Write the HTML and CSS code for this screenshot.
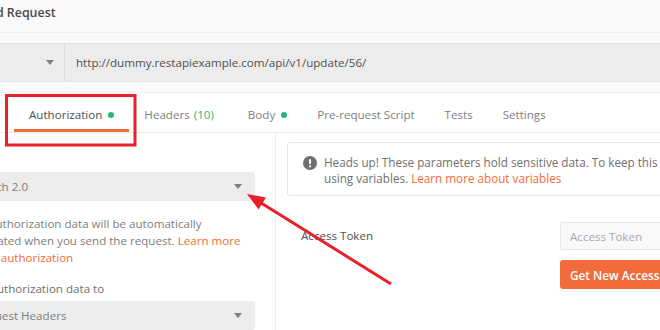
FILE: index.html
```html
<!DOCTYPE html>
<html lang="en">
<head>
    <meta charset="UTF-8">
    <meta name="viewport" content="width=device-width, initial-scale=1.0">
    <title>Untitled Request</title>
    <link rel="stylesheet" href="styles.css">
</head>
<body>
    <div class="app">
        <div class="top">
            <div class="title-bar">
                <h1>Untitled Request</h1>
            </div>
            <div class="url-bar">
                <div class="method">PUT <span class="caret"></span></div>
                <div class="url">http://dummy.restapiexample.com/api/v1/update/56/</div>
            </div>
        </div>

        <nav class="tabs">
            <div class="tab active">Authorization <span class="dot"></span></div>
            <div class="tab">Headers <span class="count">(10)</span></div>
            <div class="tab">Body <span class="dot"></span></div>
            <div class="tab">Pre-request Script</div>
            <div class="tab">Tests</div>
            <div class="tab">Settings</div>
        </nav>

        <div class="auth">
            <div class="auth-side">
                <div class="select">OAuth 2.0 <span class="caret"></span></div>
                <p class="hint">The authorization data will be automatically generated when you send the request. <a href="#">Learn more about authorization</a></p>
                <div class="field-label">Add authorization data to</div>
                <div class="select">Request Headers <span class="caret"></span></div>
            </div>

            <div class="auth-main">
                <div class="notice">
                    <svg class="notice-icon" width="14" height="14" viewBox="0 0 14 14">
                        <circle cx="7" cy="7" r="7" fill="#707070"/>
                        <rect x="6" y="3" width="2" height="5.2" rx="1" fill="#fff"/>
                        <circle cx="7" cy="10.3" r="1.1" fill="#fff"/>
                    </svg>
                    <div class="notice-text">Heads up! These parameters hold sensitive data. To keep this data secure while working in a collaborative environment, we recommend<br>using variables. <a href="#">Learn more about variables</a></div>
                </div>

                <div class="token-row">
                    <label for="token">Access Token</label>
                    <div class="token-controls">
                        <input type="text" id="token" placeholder="Access Token">
                        <button>Get New Access Token</button>
                    </div>
                </div>
            </div>
        </div>
    </div>

    <!-- annotation drawn over the screenshot -->
    <svg class="annotations" width="660" height="330" viewBox="0 0 660 330">
        <rect x="6.5" y="95.5" width="128.5" height="49.5" fill="none" stroke="#e8202a" stroke-width="3"/>
        <line x1="391" y1="284" x2="258" y2="201" stroke="#e8202a" stroke-width="3"/>
        <polygon points="247,194 266,197.6 258.6,209.4" fill="#e8202a"/>
    </svg>
</body>
</html>
```

FILE: styles.css
```css
body {
    margin: 0;
    width: 660px;
    height: 330px;
    overflow: hidden;
    position: relative;
    font-family: "Open Sans", Arial, sans-serif;
    font-size: 11.6px;
    background-color: #fff;
    color: #505050;
}
a {
    color: #f26b3a;
    text-decoration: none;
}
.app {
    margin-left: -50px;
    width: 760px;
}
.top {
    background-color: #fafafa;
    padding-bottom: 10px;
    border-bottom: 1px solid #ededed;
}
.title-bar {
    height: 33px;
    box-sizing: border-box;
    padding: 4px 0 0 5px;
    border-bottom: 1px solid #efefef;
    margin-bottom: 10px;
}
h1 {
    margin: 0;
    font-size: 12.4px;
    font-weight: 600;
    color: #4a4a4a;
}
.url-bar {
    display: flex;
    height: 39px;
    box-sizing: border-box;
    background-color: #ececec;
    border-top: 1px solid #e0e0e0;
    border-bottom: 1px solid #e3e3e3;
}
.method {
    width: 115px;
    box-sizing: border-box;
    padding: 0 10px;
    display: flex;
    align-items: center;
    justify-content: space-between;
    border-right: 1px solid #dcdcdc;
    color: #505050;
}
.url {
    display: flex;
    align-items: center;
    padding-left: 11px;
    color: #505050;
}
.caret {
    width: 0;
    height: 0;
    border-left: 4px solid transparent;
    border-right: 4px solid transparent;
    border-top: 5px solid #808080;
}
.tabs {
    display: flex;
    height: 39px;
    padding-left: 64px;
    border-bottom: 1px solid #ececec;
}
.tab {
    display: flex;
    align-items: flex-start;
    padding: 13px 15px 0;
    line-height: 17px;
    color: #808080;
    border-bottom: 3px solid transparent;
}
.tab.active {
    color: #505050;
    border-bottom-color: #f26b3a;
}
.dot {
    width: 6px;
    height: 6px;
    border-radius: 50%;
    background-color: #26b47f;
    margin: 6px 0 0 6px;
}
.count {
    color: #26b47f;
    margin: 0 4px 0 4px;
}
.auth {
    display: grid;
    grid-template-columns: 326px 1fr;
    height: 200px;
}
.auth-side {
    padding: 39px 20px 0 16px;
    border-right: 1px solid #ececec;
}
.select {
    height: 29px;
    padding: 0 13px 0 8px;
    display: flex;
    align-items: center;
    justify-content: space-between;
    background-color: #ececec;
    border-radius: 3px;
    color: #808080;
}
.hint {
    margin: 14px 0;
    line-height: 17px;
    color: #808080;
}
.field-label {
    line-height: 17px;
    color: #707070;
    margin-bottom: 4px;
}
.auth-main {
    padding: 9px 0 0 11px;
}
.notice {
    display: flex;
    gap: 7px;
    padding: 11px 12px 9px 15px;
    background-color: #fff;
    border: 1px solid #e6e6e6;
    border-radius: 3px;
}
.notice-icon {
    flex-shrink: 0;
    margin-top: 2px;
}
.notice-text {
    white-space: nowrap;
    line-height: 16px;
    font-size: 11.7px;
    color: #707070;
}
.token-row {
    display: grid;
    grid-template-columns: 273px 1fr;
    margin-top: 26px;
}
.token-row label {
    padding: 6px 0 0 14px;
    color: #505050;
}
.token-controls {
    display: flex;
    flex-direction: column;
    align-items: flex-start;
    gap: 10px;
}
.token-controls input {
    width: 300px;
    height: 28px;
    box-sizing: border-box;
    padding: 0 9px;
    font-family: "Open Sans", Arial, sans-serif;
    font-size: 11.6px;
    background-color: #f9f9f9;
    border: 1px solid #e6e6e6;
    border-radius: 3px;
}
.token-controls input::placeholder {
    color: #a8a8a8;
}
.token-controls button {
    height: 29px;
    padding: 0 10px;
    font-family: "Open Sans", Arial, sans-serif;
    font-size: 11.8px;
    font-weight: 600;
    color: #fff;
    background-color: #f26b3a;
    border: none;
    border-radius: 3px;
}
.annotations {
    position: absolute;
    top: 0;
    left: 0;
}
```
